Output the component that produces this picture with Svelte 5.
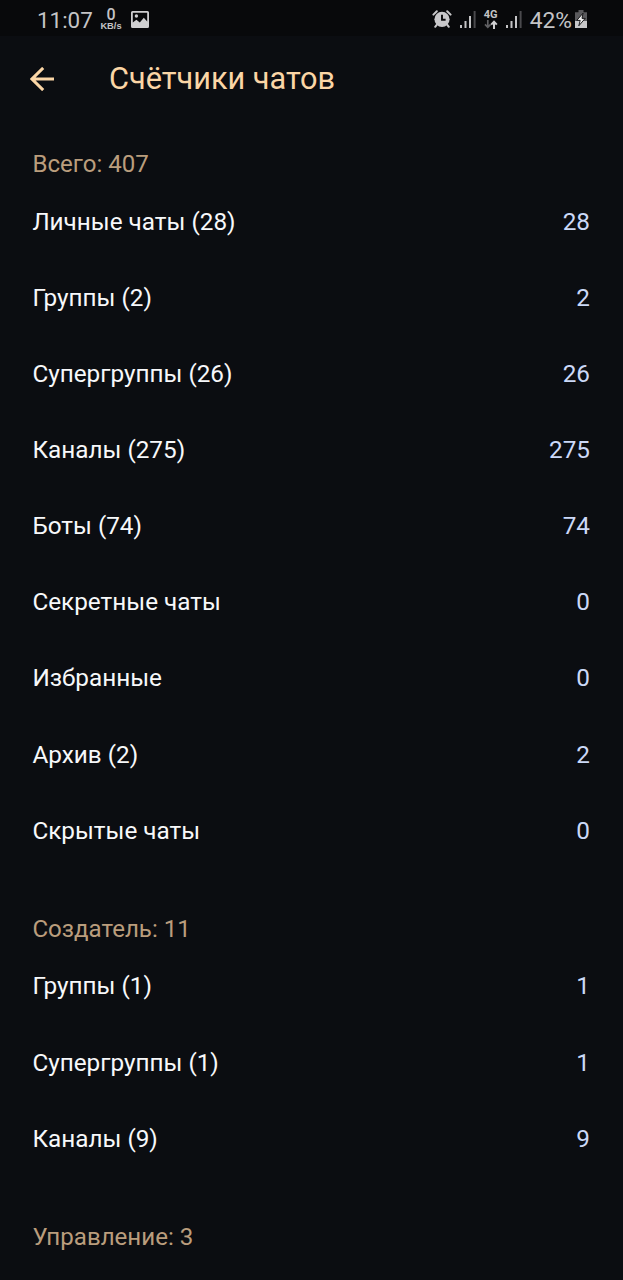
<script lang="ts">
  type Row = { name: string; shown?: number; value: number };
  type Section = { title: string; total: number; rows: Row[] };

  const sections: Section[] = [
    {
      title: 'Всего',
      total: 407,
      rows: [
        { name: 'Личные чаты', shown: 28, value: 28 },
        { name: 'Группы', shown: 2, value: 2 },
        { name: 'Супергруппы', shown: 26, value: 26 },
        { name: 'Каналы', shown: 275, value: 275 },
        { name: 'Боты', shown: 74, value: 74 },
        { name: 'Секретные чаты', value: 0 },
        { name: 'Избранные', value: 0 },
        { name: 'Архив', shown: 2, value: 2 },
        { name: 'Скрытые чаты', value: 0 },
      ],
    },
    {
      title: 'Создатель',
      total: 11,
      rows: [
        { name: 'Группы', shown: 1, value: 1 },
        { name: 'Супергруппы', shown: 1, value: 1 },
        { name: 'Каналы', shown: 9, value: 9 },
      ],
    },
    { title: 'Управление', total: 3, rows: [] },
  ];
</script>

{#snippet signal()}
  <svg class="signal" width="16" height="18" viewBox="0 0 16 18">
    <path d="M0 15h2v3H0z M4.5 11h2v7h-2z M9 6h2v12H9z" fill="#c4c4c6" />
    <path d="M13.6 1h2v17h-2z" fill="#4a4a4d" />
  </svg>
{/snippet}

<div class="screen">
  <div class="status">
    <span class="clock">11:07</span>
    <div class="speed">
      <span class="rate">0</span>
      <span class="unit">KB/s</span>
    </div>
    <svg class="picture" width="18" height="17" viewBox="0 0 18 17">
      <path
        fill="#cfcfd1"
        fill-rule="evenodd"
        d="M1.5 0h15A1.5 1.5 0 0 1 18 1.5v14a1.5 1.5 0 0 1-1.5 1.5h-15A1.5 1.5 0 0 1 0 15.5v-14A1.5 1.5 0 0 1 1.5 0zM1.8 1.8v9.6l3.6-2.6 3.4 2.6 4-4.6 3.4 3.8V1.8z"
      />
      <circle cx="5.4" cy="5" r="1.7" fill="#cfcfd1" />
    </svg>

    <div class="right">
      <svg class="alarm" width="20" height="18" viewBox="0 0 20 18">
        <circle cx="10" cy="9.3" r="7.6" fill="#c8c8ca" />
        <path d="M1.4 4.6 4.8 1.2 M18.6 4.6 15.2 1.2 M4.7 14.8 3.2 16.8 M15.3 14.8l1.5 2" stroke="#c8c8ca" stroke-width="2" stroke-linecap="round" />
        <path d="M10 4.8v5h3.6" fill="none" stroke="#0a0a0c" stroke-width="1.9" />
      </svg>
      {@render signal()}
      <div class="net">
        <span>4G</span>
        <svg width="14" height="9" viewBox="0 0 14 9">
          <path d="M3.8 0v7 M1 4.4l2.8 2.9 2.8-2.9" fill="none" stroke="#606063" stroke-width="1.7" />
          <path d="M10 9V1.8 M7.2 4.6 10 1.6l2.8 3" fill="none" stroke="#d0d0d2" stroke-width="2" />
        </svg>
      </div>
      {@render signal()}
      <span class="percent">42%</span>
      <svg class="battery" width="12" height="18" viewBox="0 0 12 18">
        <path d="M3.5 0h5v2.2H12V11H0V2.2h3.5z" fill="#5a5a5d" />
        <path d="M0 11h12v7H0z" fill="#c8c8ca" />
        <path d="M8 3.2 1.8 10.4h3.4L3.8 15.8l6.4-7.4H7z" fill="#f0f0f0" stroke="#0a0a0c" stroke-width="0.9" />
      </svg>
    </div>
  </div>

  <header>
    <svg class="back" width="24" height="24" viewBox="0 0 24 24">
      <path d="M24 12H2 M13.2 .9 2 12l11.2 11.1" fill="none" stroke="#fbd6a6" stroke-width="3" />
    </svg>
    <h1>Счётчики чатов</h1>
  </header>

  {#each sections as section}
    <section>
      <h2>{section.title}: {section.total}</h2>
      {#each section.rows as row}
        <div class="row">
          <span>{row.name}{row.shown ? ` (${row.shown})` : ''}</span>
          <span class="value">{row.value}</span>
        </div>
      {/each}
    </section>
  {/each}
</div>

<style>
  :global(body) {
    background: #0b0d11;
    overflow: hidden;
  }
  .screen {
    height: 1280px;
    overflow: hidden;
    background: #0b0d11;
    color: #f7f8fa;
    font-family: Roboto, sans-serif;
    font-size: 24.3px;
  }
  svg {
    display: block;
    flex: none;
  }
  .status {
    display: flex;
    align-items: center;
    height: 36px;
    padding: 2px 36px 0 37px;
    box-sizing: border-box;
    background: #08090b;
    color: #c4c4c6;
  }
  .clock {
    width: 63px;
    padding-top: 2px;
    font-size: 22.4px;
  }
  .speed {
    display: flex;
    flex-direction: column;
    align-items: center;
    width: 22px;
    margin-right: 9px;
    font-weight: 500;
  }
  .rate {
    font-size: 16px;
    line-height: 14px;
  }
  .unit {
    font-family: 'Liberation Sans', sans-serif;
    font-size: 9.3px;
    font-weight: 700;
    line-height: 9px;
  }
  .right {
    display: flex;
    align-items: center;
    margin-left: auto;
  }
  .alarm {
    margin-right: 8px;
  }
  .net {
    display: flex;
    flex-direction: column;
    align-items: center;
    width: 16px;
    margin: 0 7px 0 7px;
    font-size: 11px;
    font-weight: 700;
    line-height: 11px;
  }
  .percent {
    margin: 0 3px 0 8px;
    padding-top: 2px;
    font-size: 22.8px;
  }
  header {
    display: flex;
    align-items: center;
    height: 86px;
    padding-left: 30px;
    box-sizing: border-box;
  }
  h1 {
    margin: 0 0 0 55px;
    font-size: 30.7px;
    font-weight: 400;
    line-height: 36px;
    color: #fbd6a6;
  }
  h2 {
    height: 61px;
    margin: 0;
    padding: 27px 33px 0 32.4px;
    box-sizing: border-box;
    font-size: 24.1px;
    font-weight: 400;
    line-height: 30px;
    color: #ba9d7d;
  }
  section + section {
    margin-top: 18.6px;
  }
  .row {
    display: flex;
    align-items: center;
    justify-content: space-between;
    height: 76.15px;
    padding: 0 33px 0 32.4px;
  }
  .value {
    color: #ccd9f8;
  }
</style>
